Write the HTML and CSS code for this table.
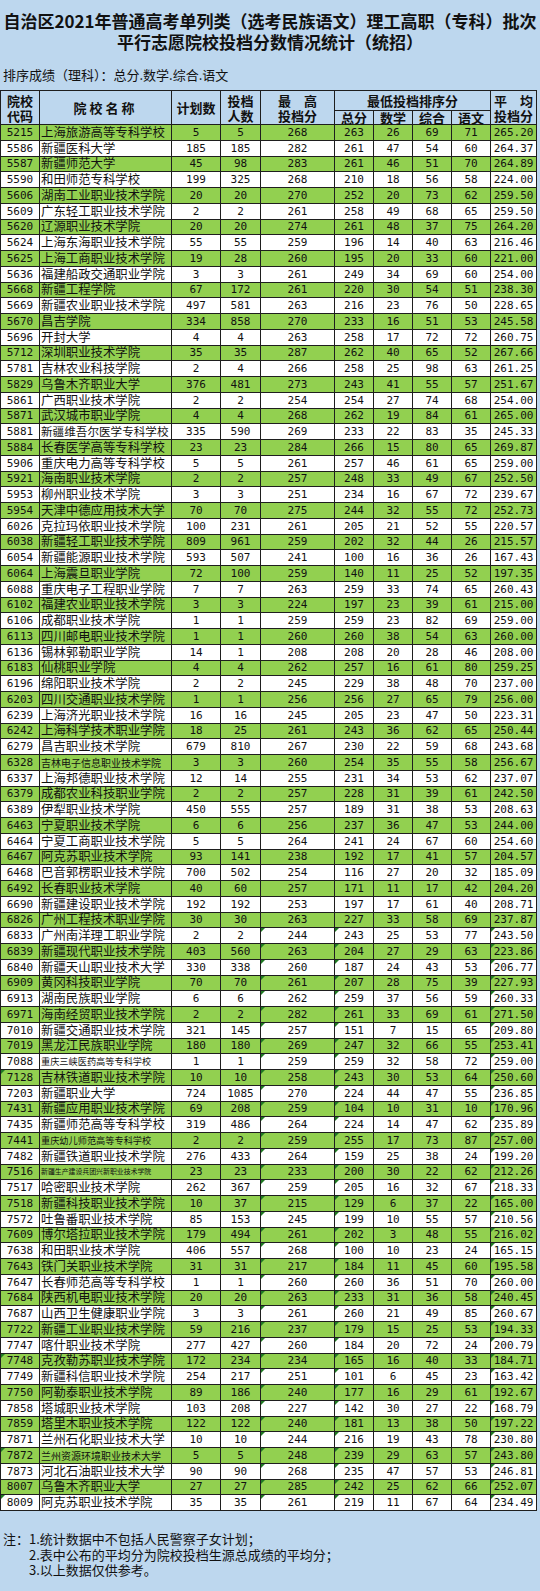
FILE: index.html
```html
<!DOCTYPE html>
<html lang="zh-CN">
<head>
<meta charset="utf-8">
<title>平行志愿院校投档分数情况统计</title>
<link rel="stylesheet" href="styles.css">
</head>
<body>
<header class="head">
  <div class="title">自治区2021年普通高考单列类（选考民族语文）理工高职（专科）批次</div>
  <div class="title">平行志愿院校投档分数情况统计（统招）</div>
</header>
<div class="sub">排序成绩（理科）：总分.数学.综合.语文</div>
<table class="grid">
  <colgroup>
    <col class="c1"><col class="c2"><col class="c3"><col class="c4"><col class="c5">
    <col class="c6"><col class="c7"><col class="c8"><col class="c9"><col class="c10">
  </colgroup>
  <thead>
    <tr class="h1">
      <th rowspan="2">院校<br>代码</th>
      <th rowspan="2" class="wide">院校名称</th>
      <th rowspan="2">计划数</th>
      <th rowspan="2">投档<br>人数</th>
      <th rowspan="2"><span class="sp"><span>最</span><span>高</span></span><br>投档分</th>
      <th colspan="4">最低投档排序分</th>
      <th rowspan="2"><span class="sp"><span>平</span><span>均</span></span><br>投档分</th>
    </tr>
    <tr class="h2">
      <th>总分</th><th>数学</th><th>综合</th><th>语文</th>
    </tr>
  </thead>
  <tbody>
    <tr class="g"><td>5215</td><td class="n">上海旅游高等专科学校</td><td>5</td><td>5</td><td>268</td><td>263</td><td>26</td><td>69</td><td>71</td><td>265.20</td></tr>
    <tr><td>5586</td><td class="n">新疆医科大学</td><td>185</td><td>185</td><td>282</td><td>261</td><td>47</td><td>54</td><td>60</td><td>264.37</td></tr>
    <tr class="g"><td>5587</td><td class="n">新疆师范大学</td><td>45</td><td>98</td><td>283</td><td>261</td><td>46</td><td>51</td><td>70</td><td>264.89</td></tr>
    <tr><td>5590</td><td class="n">和田师范专科学校</td><td>199</td><td>325</td><td>268</td><td>210</td><td>18</td><td>56</td><td>58</td><td>224.00</td></tr>
    <tr class="g"><td>5606</td><td class="n">湖南工业职业技术学院</td><td>20</td><td>20</td><td>270</td><td>252</td><td>20</td><td>73</td><td>62</td><td>259.50</td></tr>
    <tr><td>5609</td><td class="n">广东轻工职业技术学院</td><td>2</td><td>2</td><td>261</td><td>258</td><td>49</td><td>68</td><td>65</td><td>259.50</td></tr>
    <tr class="g"><td>5620</td><td class="n">辽源职业技术学院</td><td>20</td><td>20</td><td>274</td><td>261</td><td>48</td><td>37</td><td>75</td><td>264.20</td></tr>
    <tr><td>5624</td><td class="n">上海东海职业技术学院</td><td>55</td><td>55</td><td>259</td><td>196</td><td>14</td><td>40</td><td>63</td><td>216.46</td></tr>
    <tr class="g"><td>5625</td><td class="n">上海工商职业技术学院</td><td>19</td><td>28</td><td>260</td><td>195</td><td>20</td><td>33</td><td>60</td><td>221.00</td></tr>
    <tr><td>5636</td><td class="n">福建船政交通职业学院</td><td>3</td><td>3</td><td>261</td><td>249</td><td>34</td><td>69</td><td>60</td><td>254.00</td></tr>
    <tr class="g"><td>5668</td><td class="n">新疆工程学院</td><td>67</td><td>172</td><td>261</td><td>220</td><td>30</td><td>54</td><td>51</td><td>238.30</td></tr>
    <tr><td>5669</td><td class="n">新疆农业职业技术学院</td><td>497</td><td>581</td><td>263</td><td>216</td><td>23</td><td>76</td><td>50</td><td>228.65</td></tr>
    <tr class="g"><td>5670</td><td class="n">昌吉学院</td><td>334</td><td>858</td><td>270</td><td>233</td><td>16</td><td>51</td><td>53</td><td>245.58</td></tr>
    <tr><td>5696</td><td class="n">开封大学</td><td>4</td><td>4</td><td>263</td><td>258</td><td>17</td><td>72</td><td>72</td><td>260.75</td></tr>
    <tr class="g"><td>5712</td><td class="n">深圳职业技术学院</td><td>35</td><td>35</td><td>287</td><td>262</td><td>40</td><td>65</td><td>52</td><td>267.66</td></tr>
    <tr><td>5781</td><td class="n">吉林农业科技学院</td><td>2</td><td>4</td><td>266</td><td>258</td><td>25</td><td>98</td><td>63</td><td>261.25</td></tr>
    <tr class="g"><td>5829</td><td class="n">乌鲁木齐职业大学</td><td>376</td><td>481</td><td>273</td><td>243</td><td>41</td><td>55</td><td>57</td><td>251.67</td></tr>
    <tr><td>5861</td><td class="n">广西职业技术学院</td><td>2</td><td>2</td><td>254</td><td>254</td><td>27</td><td>74</td><td>68</td><td>254.00</td></tr>
    <tr class="g"><td>5871</td><td class="n">武汉城市职业学院</td><td>4</td><td>4</td><td>268</td><td>262</td><td>19</td><td>84</td><td>61</td><td>265.00</td></tr>
    <tr><td>5881</td><td class="n s11">新疆维吾尔医学专科学校</td><td>335</td><td>590</td><td>269</td><td>233</td><td>22</td><td>83</td><td>35</td><td>245.33</td></tr>
    <tr class="g"><td>5884</td><td class="n">长春医学高等专科学校</td><td>23</td><td>23</td><td>284</td><td>266</td><td>15</td><td>80</td><td>65</td><td>269.87</td></tr>
    <tr><td>5906</td><td class="n">重庆电力高等专科学校</td><td>5</td><td>5</td><td>261</td><td>257</td><td>46</td><td>61</td><td>65</td><td>259.00</td></tr>
    <tr class="g"><td>5921</td><td class="n">海南职业技术学院</td><td>2</td><td>2</td><td>257</td><td>248</td><td>33</td><td>49</td><td>67</td><td>252.50</td></tr>
    <tr><td>5953</td><td class="n">柳州职业技术学院</td><td>3</td><td>3</td><td>251</td><td>234</td><td>16</td><td>67</td><td>72</td><td>239.67</td></tr>
    <tr class="g"><td>5954</td><td class="n">天津中德应用技术大学</td><td>70</td><td>70</td><td>275</td><td>244</td><td>32</td><td>55</td><td>72</td><td>252.73</td></tr>
    <tr><td>6026</td><td class="n">克拉玛依职业技术学院</td><td>100</td><td>231</td><td>261</td><td>205</td><td>21</td><td>52</td><td>55</td><td>220.57</td></tr>
    <tr class="g"><td>6038</td><td class="n">新疆轻工职业技术学院</td><td>809</td><td>961</td><td>259</td><td>202</td><td>32</td><td>44</td><td>26</td><td>215.57</td></tr>
    <tr><td>6054</td><td class="n">新疆能源职业技术学院</td><td>593</td><td>507</td><td>241</td><td>100</td><td>16</td><td>36</td><td>26</td><td>167.43</td></tr>
    <tr class="g"><td>6064</td><td class="n">上海震旦职业学院</td><td>72</td><td>100</td><td>259</td><td>140</td><td>11</td><td>25</td><td>52</td><td>197.35</td></tr>
    <tr><td>6088</td><td class="n">重庆电子工程职业学院</td><td>7</td><td>7</td><td>263</td><td>259</td><td>33</td><td>74</td><td>65</td><td>260.43</td></tr>
    <tr class="g"><td>6102</td><td class="n">福建农业职业技术学院</td><td>3</td><td>3</td><td>224</td><td>197</td><td>23</td><td>39</td><td>61</td><td>215.00</td></tr>
    <tr><td>6106</td><td class="n">成都职业技术学院</td><td>1</td><td>1</td><td>259</td><td>259</td><td>23</td><td>82</td><td>69</td><td>259.00</td></tr>
    <tr class="g"><td>6113</td><td class="n">四川邮电职业技术学院</td><td>1</td><td>1</td><td>260</td><td>260</td><td>38</td><td>54</td><td>63</td><td>260.00</td></tr>
    <tr><td>6136</td><td class="n">锡林郭勒职业学院</td><td>14</td><td>1</td><td>208</td><td>208</td><td>20</td><td>28</td><td>46</td><td>208.00</td></tr>
    <tr class="g"><td>6183</td><td class="n">仙桃职业学院</td><td>4</td><td>4</td><td>262</td><td>257</td><td>16</td><td>61</td><td>80</td><td>259.25</td></tr>
    <tr><td>6196</td><td class="n">绵阳职业技术学院</td><td>2</td><td>2</td><td>245</td><td>229</td><td>38</td><td>48</td><td>70</td><td>237.00</td></tr>
    <tr class="g"><td>6203</td><td class="n">四川交通职业技术学院</td><td>1</td><td>1</td><td>256</td><td>256</td><td>27</td><td>65</td><td>79</td><td>256.00</td></tr>
    <tr><td>6239</td><td class="n">上海济光职业技术学院</td><td>16</td><td>16</td><td>245</td><td>205</td><td>23</td><td>47</td><td>50</td><td>223.31</td></tr>
    <tr class="g"><td>6242</td><td class="n">上海科学技术职业学院</td><td>18</td><td>25</td><td>261</td><td>243</td><td>36</td><td>62</td><td>65</td><td>250.44</td></tr>
    <tr><td>6279</td><td class="n">昌吉职业技术学院</td><td>679</td><td>810</td><td>267</td><td>230</td><td>22</td><td>59</td><td>68</td><td>243.68</td></tr>
    <tr class="g"><td>6328</td><td class="n s10">吉林电子信息职业技术学院</td><td>3</td><td>3</td><td>260</td><td>254</td><td>35</td><td>55</td><td>58</td><td>256.67</td></tr>
    <tr><td>6337</td><td class="n">上海邦德职业技术学院</td><td>12</td><td>14</td><td>255</td><td>231</td><td>34</td><td>53</td><td>62</td><td>237.07</td></tr>
    <tr class="g"><td>6379</td><td class="n">成都农业科技职业学院</td><td>2</td><td>2</td><td>257</td><td>228</td><td>31</td><td>39</td><td>61</td><td>242.50</td></tr>
    <tr><td>6389</td><td class="n">伊犁职业技术学院</td><td>450</td><td>555</td><td>257</td><td>189</td><td>31</td><td>38</td><td>53</td><td>208.63</td></tr>
    <tr class="g"><td>6463</td><td class="n">宁夏职业技术学院</td><td>6</td><td>6</td><td>256</td><td>237</td><td>36</td><td>47</td><td>53</td><td>244.00</td></tr>
    <tr><td>6464</td><td class="n">宁夏工商职业技术学院</td><td>5</td><td>5</td><td>264</td><td>241</td><td>24</td><td>67</td><td>60</td><td>254.60</td></tr>
    <tr class="g"><td>6467</td><td class="n">阿克苏职业技术学院</td><td>93</td><td>141</td><td>238</td><td>192</td><td>17</td><td>41</td><td>57</td><td>204.57</td></tr>
    <tr><td>6468</td><td class="n">巴音郭楞职业技术学院</td><td>700</td><td>502</td><td>254</td><td>116</td><td>27</td><td>20</td><td>32</td><td>185.09</td></tr>
    <tr class="g"><td>6492</td><td class="n">长春职业技术学院</td><td>40</td><td>60</td><td>257</td><td>171</td><td>11</td><td>17</td><td>42</td><td>204.20</td></tr>
    <tr><td>6690</td><td class="n">新疆建设职业技术学院</td><td>192</td><td>192</td><td>253</td><td>197</td><td>17</td><td>61</td><td>40</td><td>208.71</td></tr>
    <tr class="g"><td>6826</td><td class="n">广州工程技术职业学院</td><td>30</td><td>30</td><td>263</td><td>227</td><td>33</td><td>58</td><td>69</td><td>237.87</td></tr>
    <tr class="t"><td>6833</td><td class="n">广州南洋理工职业学院</td><td>2</td><td>2</td><td>244</td><td>243</td><td>25</td><td>53</td><td>77</td><td>243.50</td></tr>
    <tr class="g t"><td>6839</td><td class="n">新疆现代职业技术学院</td><td>403</td><td>560</td><td>263</td><td>204</td><td>27</td><td>29</td><td>63</td><td>223.86</td></tr>
    <tr class="t"><td>6840</td><td class="n">新疆天山职业技术大学</td><td>330</td><td>338</td><td>260</td><td>187</td><td>24</td><td>43</td><td>53</td><td>206.77</td></tr>
    <tr class="g t"><td>6909</td><td class="n">黄冈科技职业学院</td><td>70</td><td>70</td><td>261</td><td>207</td><td>28</td><td>75</td><td>39</td><td>227.93</td></tr>
    <tr class="t"><td>6913</td><td class="n">湖南民族职业学院</td><td>6</td><td>6</td><td>262</td><td>259</td><td>37</td><td>56</td><td>59</td><td>260.33</td></tr>
    <tr class="g t"><td>6971</td><td class="n">海南经贸职业技术学院</td><td>2</td><td>2</td><td>282</td><td>261</td><td>33</td><td>69</td><td>61</td><td>271.50</td></tr>
    <tr class="t"><td>7010</td><td class="n">新疆交通职业技术学院</td><td>321</td><td>145</td><td>257</td><td>151</td><td>7</td><td>15</td><td>65</td><td>209.80</td></tr>
    <tr class="g t"><td>7019</td><td class="n">黑龙江民族职业学院</td><td>180</td><td>180</td><td>269</td><td>247</td><td>32</td><td>66</td><td>55</td><td>253.41</td></tr>
    <tr class="t"><td>7088</td><td class="n s9">重庆三峡医药高等专科学校</td><td>1</td><td>1</td><td>259</td><td>259</td><td>32</td><td>58</td><td>72</td><td>259.00</td></tr>
    <tr class="g t k"><td>7128</td><td class="n">吉林铁道职业技术学院</td><td>10</td><td>10</td><td>258</td><td>243</td><td>30</td><td>53</td><td>64</td><td>250.60</td></tr>
    <tr class="t"><td>7203</td><td class="n">新疆职业大学</td><td>724</td><td>1085</td><td>270</td><td>224</td><td>44</td><td>47</td><td>55</td><td>236.85</td></tr>
    <tr class="g t"><td>7431</td><td class="n">新疆应用职业技术学院</td><td>69</td><td>208</td><td>259</td><td>104</td><td>10</td><td>31</td><td>10</td><td>170.96</td></tr>
    <tr class="t"><td>7435</td><td class="n">新疆师范高等专科学校</td><td>319</td><td>486</td><td>264</td><td>224</td><td>14</td><td>47</td><td>62</td><td>235.89</td></tr>
    <tr class="g t"><td>7441</td><td class="n s9">重庆幼儿师范高等专科学校</td><td>2</td><td>2</td><td>259</td><td>255</td><td>17</td><td>73</td><td>87</td><td>257.00</td></tr>
    <tr class="t"><td>7482</td><td class="n">新疆铁道职业技术学院</td><td>276</td><td>433</td><td>264</td><td>159</td><td>25</td><td>38</td><td>24</td><td>199.20</td></tr>
    <tr class="g t"><td>7516</td><td class="n s7">新疆生产建设兵团兴新职业技术学院</td><td>23</td><td>23</td><td>233</td><td>200</td><td>30</td><td>22</td><td>62</td><td>212.26</td></tr>
    <tr class="t"><td>7517</td><td class="n">哈密职业技术学院</td><td>262</td><td>367</td><td>259</td><td>205</td><td>16</td><td>32</td><td>67</td><td>218.33</td></tr>
    <tr class="g t"><td>7518</td><td class="n">新疆科技职业技术学院</td><td>10</td><td>37</td><td>215</td><td>129</td><td>6</td><td>37</td><td>22</td><td>165.00</td></tr>
    <tr class="t"><td>7572</td><td class="n">吐鲁番职业技术学院</td><td>85</td><td>153</td><td>245</td><td>199</td><td>10</td><td>55</td><td>57</td><td>210.56</td></tr>
    <tr class="g t"><td>7609</td><td class="n">博尔塔拉职业技术学院</td><td>179</td><td>494</td><td>261</td><td>202</td><td>3</td><td>48</td><td>55</td><td>216.02</td></tr>
    <tr class="t"><td>7638</td><td class="n">和田职业技术学院</td><td>406</td><td>557</td><td>268</td><td>100</td><td>10</td><td>23</td><td>24</td><td>165.15</td></tr>
    <tr class="g t"><td>7643</td><td class="n">铁门关职业技术学院</td><td>31</td><td>31</td><td>217</td><td>184</td><td>11</td><td>45</td><td>60</td><td>195.58</td></tr>
    <tr class="t"><td>7647</td><td class="n">长春师范高等专科学校</td><td>1</td><td>1</td><td>260</td><td>260</td><td>36</td><td>51</td><td>70</td><td>260.00</td></tr>
    <tr class="g t"><td>7684</td><td class="n">陕西机电职业技术学院</td><td>20</td><td>20</td><td>263</td><td>233</td><td>31</td><td>36</td><td>58</td><td>240.45</td></tr>
    <tr class="t"><td>7687</td><td class="n">山西卫生健康职业学院</td><td>3</td><td>3</td><td>261</td><td>260</td><td>21</td><td>49</td><td>85</td><td>260.67</td></tr>
    <tr class="g t"><td>7722</td><td class="n">新疆工业职业技术学院</td><td>59</td><td>216</td><td>237</td><td>179</td><td>15</td><td>25</td><td>53</td><td>194.33</td></tr>
    <tr class="t"><td>7747</td><td class="n">喀什职业技术学院</td><td>277</td><td>427</td><td>260</td><td>184</td><td>20</td><td>72</td><td>24</td><td>200.79</td></tr>
    <tr class="g t k"><td>7748</td><td class="n">克孜勒苏职业技术学院</td><td>172</td><td>234</td><td>234</td><td>165</td><td>16</td><td>40</td><td>33</td><td>184.71</td></tr>
    <tr class="t"><td>7749</td><td class="n">新疆科信职业技术学院</td><td>254</td><td>217</td><td>251</td><td>101</td><td>6</td><td>45</td><td>23</td><td>163.42</td></tr>
    <tr class="g t"><td>7750</td><td class="n">阿勒泰职业技术学院</td><td>89</td><td>186</td><td>240</td><td>177</td><td>16</td><td>29</td><td>61</td><td>192.67</td></tr>
    <tr class="t"><td>7858</td><td class="n">塔城职业技术学院</td><td>103</td><td>208</td><td>227</td><td>142</td><td>30</td><td>27</td><td>22</td><td>168.79</td></tr>
    <tr class="g t"><td>7859</td><td class="n">塔里木职业技术学院</td><td>122</td><td>122</td><td>240</td><td>181</td><td>13</td><td>38</td><td>50</td><td>197.22</td></tr>
    <tr class="t"><td>7871</td><td class="n">兰州石化职业技术大学</td><td>10</td><td>10</td><td>244</td><td>216</td><td>19</td><td>43</td><td>78</td><td>230.80</td></tr>
    <tr class="g t k"><td>7872</td><td class="n s10">兰州资源环境职业技术大学</td><td>5</td><td>5</td><td>248</td><td>239</td><td>29</td><td>63</td><td>57</td><td>243.80</td></tr>
    <tr class="t"><td>7873</td><td class="n">河北石油职业技术大学</td><td>90</td><td>90</td><td>268</td><td>235</td><td>47</td><td>57</td><td>53</td><td>246.81</td></tr>
    <tr class="g t"><td>8007</td><td class="n">乌鲁木齐职业大学</td><td>27</td><td>27</td><td>285</td><td>242</td><td>25</td><td>62</td><td>66</td><td>252.07</td></tr>
    <tr class="t k"><td>8009</td><td class="n">阿克苏职业技术学院</td><td>35</td><td>35</td><td>261</td><td>219</td><td>11</td><td>67</td><td>64</td><td>234.49</td></tr>
  </tbody>
</table>
<div class="notes">
  <span class="lbl">注：</span>
  <div class="items">
    <div>1.统计数据中不包括人民警察子女计划；</div>
    <div>2.表中公布的平均分为院校投档生源总成绩的平均分；</div>
    <div>3.以上数据仅供参考。</div>
  </div>
</div>
</body>
</html>
```
FILE: styles.css
```css
* { box-sizing: border-box; }

body {
  margin: 0;
  width: 540px;
  background: #bdd7ee;
  color: #111;
  font-family: "Noto Sans CJK SC", "Noto Sans", sans-serif;
}

.head {
  padding-top: 10px;
}

.title {
  text-align: center;
  font-size: 17px;
  line-height: 21px;
  font-weight: 700;
  white-space: nowrap;
}

.sub {
  margin: 14px 0 6px;
  padding-left: 3px;
  font-size: 13px;
  line-height: 18px;
}

.grid {
  border-collapse: collapse;
  table-layout: fixed;
  width: 536px;
}

.c1 { width: 39px; }
.c2 { width: 132px; }
.c3 { width: 49px; }
.c4 { width: 40px; }
.c5 { width: 74px; }
.c6 { width: 39px; }
.c7 { width: 39px; }
.c8 { width: 39px; }
.c9 { width: 39px; }
.c10 { width: 46px; }

.grid th,
.grid td {
  border: 1px solid #1e1e1e;
  padding: 0;
  vertical-align: middle;
  white-space: nowrap;
}

.grid thead th {
  font-size: 13px;
  font-weight: 700;
  line-height: 15px;
  text-align: center;
}

.grid .h1 { height: 20px; }
.grid .h2 { height: 14px; }

.grid .h2 th {
  line-height: 13px;
}

.grid th.wide {
  letter-spacing: 3px;
}

.sp {
  display: inline-flex;
  justify-content: space-between;
  width: 3em;
}

.grid tbody tr { height: 15.76px; }

.grid tbody td {
  background: #fff;
  font-family: "DejaVu Sans Mono", monospace;
  font-size: 11px;
  line-height: 13px;
  text-align: center;
}

.grid tbody tr.g td { background: #92d050; }

.grid tbody td.n {
  font-family: "Noto Sans CJK SC", sans-serif;
  font-size: 12.4px;
  text-align: left;
  padding-left: 1px;
}

.grid tbody td.s11 { font-size: 11.6px; }
.grid tbody td.s10 { font-size: 10px; }
.grid tbody td.s9 { font-size: 9.2px; }
.grid tbody td.s7 { font-size: 6.9px; }

/* Excel "number stored as text" corner markers */
.grid tr.t td:nth-child(5),
.grid tr.t td:nth-child(6),
.grid tr.t td:nth-child(10),
.grid tr.k td:nth-child(1) {
  position: relative;
}

.grid tr.t td:nth-child(5)::before,
.grid tr.t td:nth-child(6)::before,
.grid tr.t td:nth-child(10)::before,
.grid tr.k td:nth-child(1)::before {
  content: "";
  position: absolute;
  left: 0;
  top: 0;
  border-top: 4px solid #1f7a23;
  border-right: 4px solid transparent;
}

.notes {
  display: flex;
  margin-top: 20px;
  padding-left: 3px;
  font-size: 13px;
  line-height: 15.5px;
}
```
